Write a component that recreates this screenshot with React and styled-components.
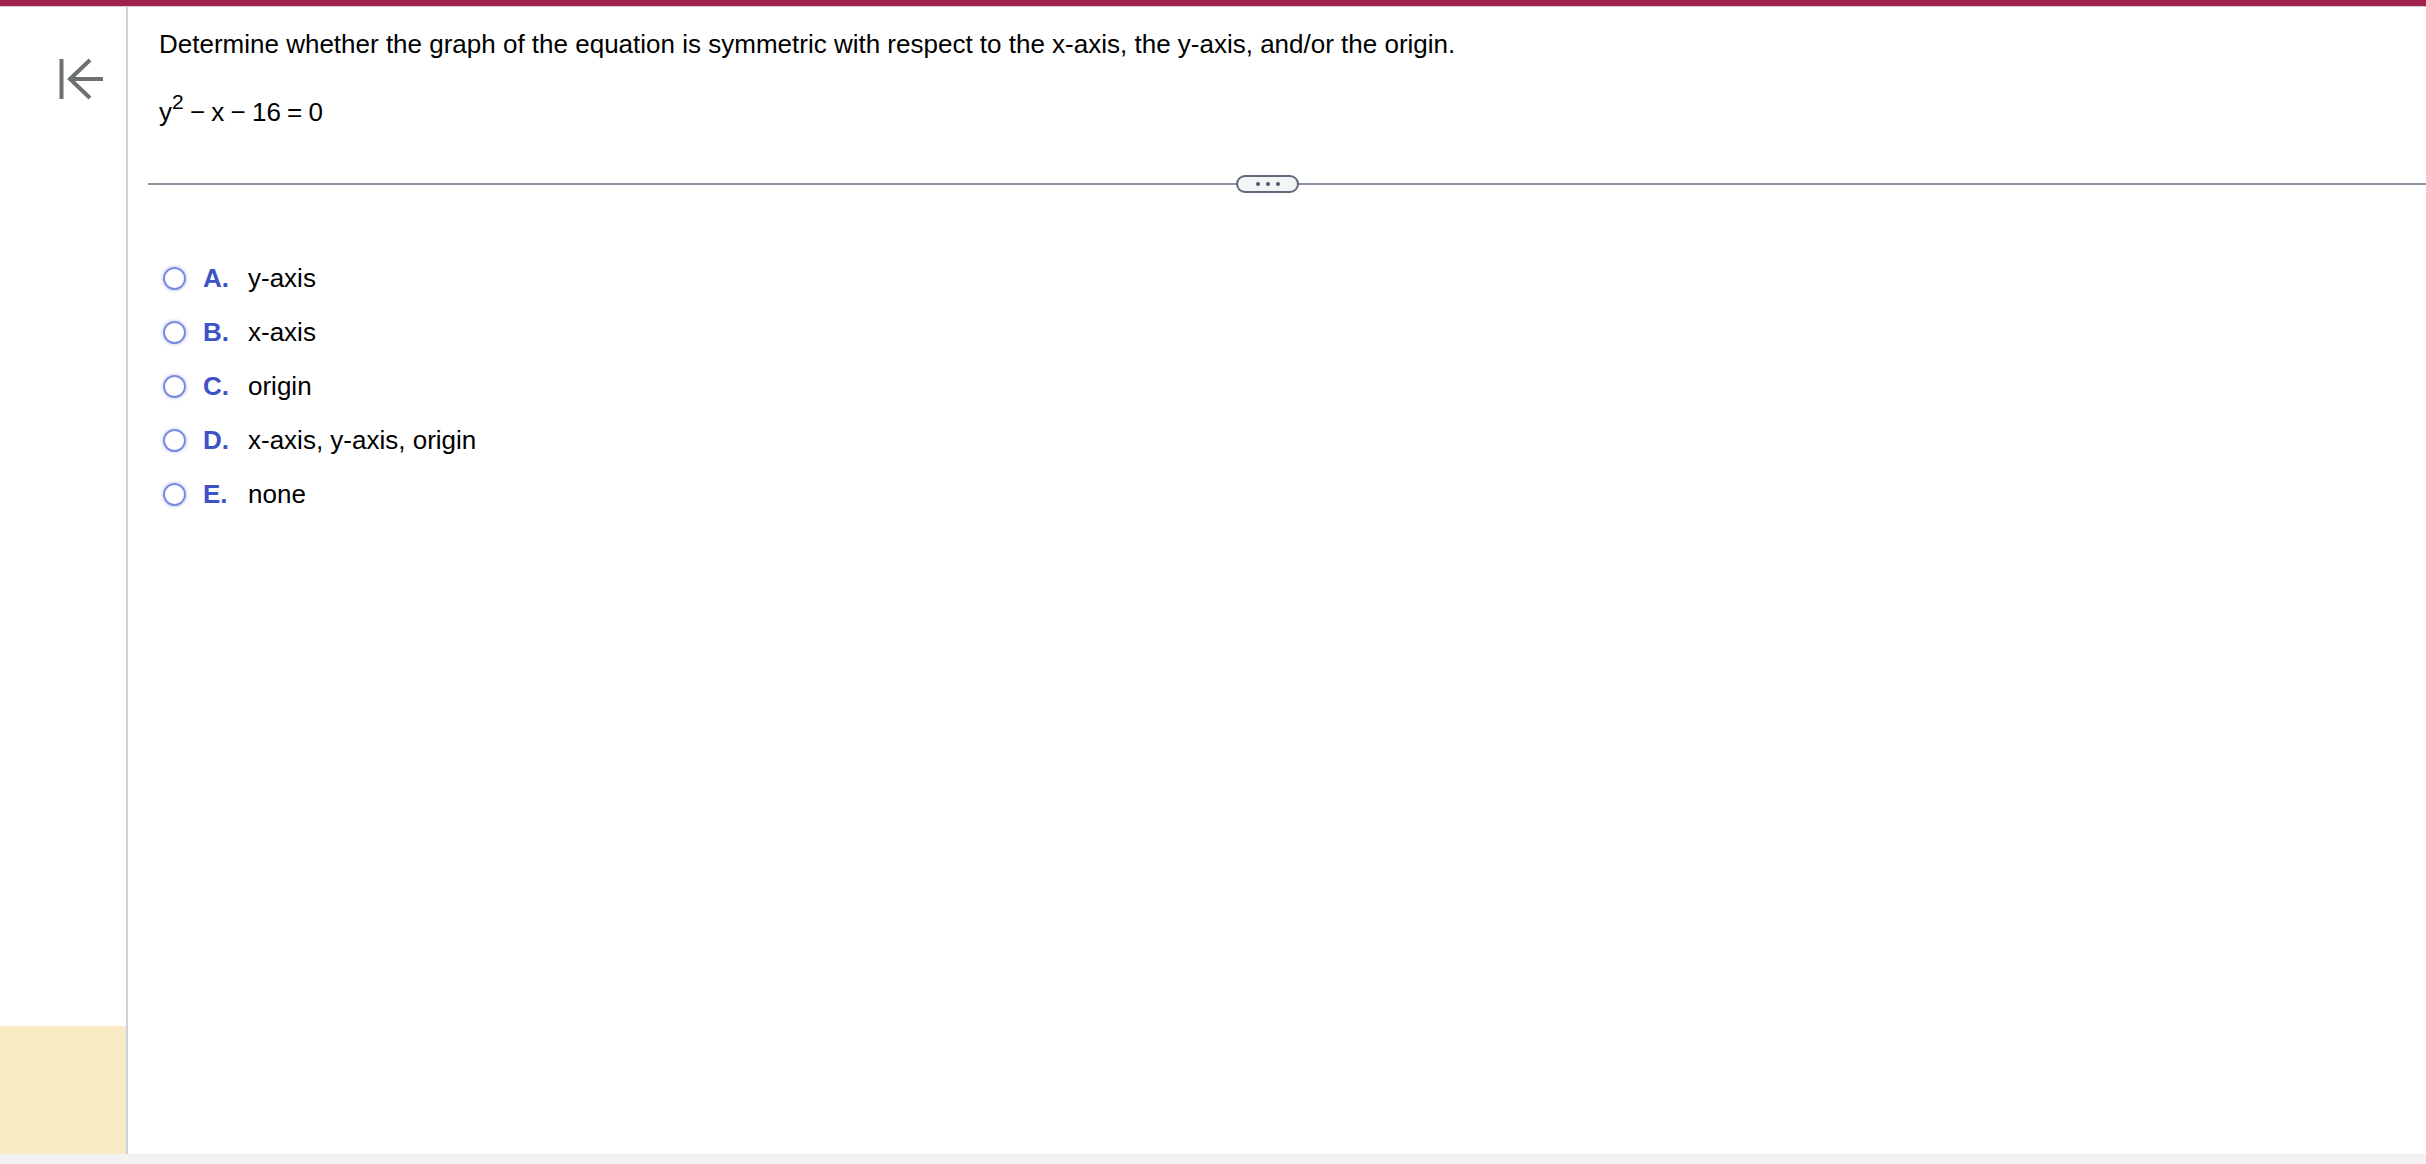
import React from 'react';
import styled, { createGlobalStyle } from 'styled-components';

const GlobalStyle = createGlobalStyle`
  html, body {
    margin: 0;
    padding: 0;
    background: #ffffff;
  }
  body {
    font-family: "Liberation Sans", Arial, sans-serif;
    color: #000;
  }
`;

//whole page frame
const Page = styled.div`
  display: flex;
  flex-direction: column;
  height: 100vh;
  overflow: hidden;
`;

const TopBar = styled.div`
  height: 6px;
  background-color: #a0234b;
  border-bottom: 1px solid #ccd0d8;
  flex: none;
`;

const Main = styled.div`
  display: flex;
  flex: 1;
  min-height: 0;
`;

const Sidebar = styled.div`
  width: 126px;
  border-right: 2px solid #cdd0dc;
  display: flex;
  flex-direction: column;
  flex: none;
`;

const BackButton = styled.button`
  margin: 43px 0 0 55px;
  padding: 0;
  width: 54px;
  height: 50px;
  border: none;
  background: none;
  cursor: pointer;
`;

const HintBox = styled.div`
  margin-top: auto;
  height: 128px;
  background-color: #f8ebc4;
`;

const Content = styled.div`
  flex: 1;
  padding: 22px 0 0 20px;
`;

const Question = styled.div`
  padding-left: 11px;
  font-size: 26px;
`;

const Prompt = styled.p`
  margin: 0;
  line-height: 30px;
`;

const Equation = styled.p`
  margin: 38px 0 0;
  line-height: 30px;
  word-spacing: -1px;
`;

const Sup = styled.sup`
  font-size: 21px;
  line-height: 0;
  vertical-align: 12px;
`;

const Divider = styled.div`
  position: relative;
  margin-top: 56px;
  height: 2px;
  background-color: #8a94a3;
`;

const MoreButton = styled.button`
  position: absolute;
  left: 1088px;
  top: -8px;
  width: 63px;
  height: 18px;
  box-sizing: border-box;
  border: 2px solid #5f6b7a;
  border-radius: 9px;
  background-color: #f2f4f6;
  padding: 0;
  display: flex;
  align-items: center;
  justify-content: center;
  gap: 6px;
`;

const Dot = styled.span`
  width: 4px;
  height: 4px;
  border-radius: 50%;
  background-color: #4f5660;
`;

const Options = styled.div`
  margin-top: 79px;
  padding-left: 15px;
  display: flex;
  flex-direction: column;
  gap: 26px;
`;

const Option = styled.label`
  display: flex;
  align-items: center;
  height: 28px;
  font-size: 26px;
  cursor: pointer;
`;

const Radio = styled.span`
  width: 23px;
  height: 23px;
  box-sizing: border-box;
  border-radius: 50%;
  border: 2.5px solid #7b8ce0;
  box-shadow: 0 0 3px 1px rgba(123, 140, 224, 0.35);
  flex: none;
`;

const Letter = styled.span`
  margin-left: 17px;
  width: 45px;
  font-weight: bold;
  color: #3d52c4;
`;

const BottomBar = styled.div`
  height: 10px;
  background-color: #f2f2f2;
  flex: none;
`;

const BackIcon = () => (
  <svg width="54" height="50" viewBox="0 0 54 50" fill="none" stroke="#6b7070" strokeWidth="4" strokeLinecap="butt">
    <line x1="6.5" y1="9" x2="6.5" y2="49" />
    <line x1="14" y1="29" x2="48" y2="29" />
    <polyline points="35,10 15,29 35,48" strokeLinejoin="miter" />
  </svg>
);

const choices = [
  { letter: 'A.', text: 'y-axis' },
  { letter: 'B.', text: 'x-axis' },
  { letter: 'C.', text: 'origin' },
  { letter: 'D.', text: 'x-axis, y-axis, origin' },
  { letter: 'E.', text: 'none' },
];

export default function App() {
  return (
    <Page>
      <GlobalStyle />
      <TopBar />
      <Main>
        <Sidebar>
          <BackButton aria-label="back">
            <BackIcon />
          </BackButton>
          <HintBox />
        </Sidebar>
        <Content>
          <Question>
            <Prompt>
              Determine whether the graph of the equation is symmetric with respect to the x-axis, the y-axis, and/or the origin.
            </Prompt>
            <Equation>
              y<Sup>2</Sup> − x − 16 = 0
            </Equation>
          </Question>
          <Divider>
            <MoreButton aria-label="more">
              <Dot />
              <Dot />
              <Dot />
            </MoreButton>
          </Divider>
          <Options>
            {choices.map(c => (
              <Option key={c.letter}>
                <Radio />
                <Letter>{c.letter}</Letter>
                <span>{c.text}</span>
              </Option>
            ))}
          </Options>
        </Content>
      </Main>
      <BottomBar />
    </Page>
  );
}
